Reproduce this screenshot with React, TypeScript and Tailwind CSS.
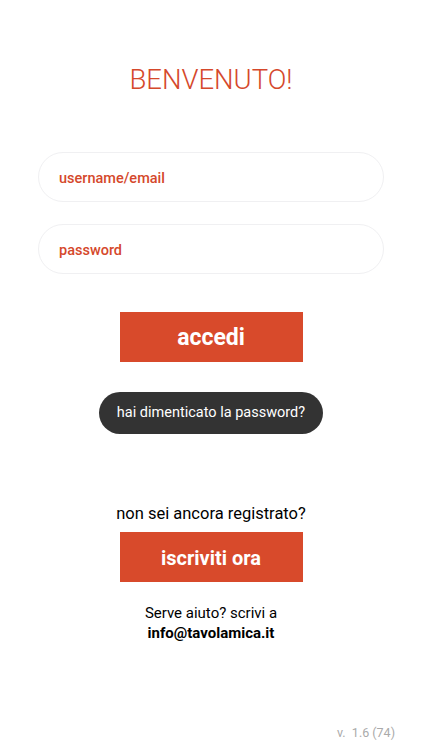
import React from "react";

export default function App() {
  return (
    <div
      className="w-[422px] h-[750px] bg-white flex flex-col items-center relative"
      style={{ fontFamily: "Roboto, 'Liberation Sans', sans-serif" }}
    >
      <h1 className="mt-[60px] h-[40px] text-[27.5px] leading-[40px] font-light text-[#d5482b]">
        BENVENUTO!
      </h1>
      <div className="mt-[52px] w-[346px] flex flex-col gap-[22px]">
        <div className="h-[50px] rounded-full border border-[#f0f0f2] flex items-center pl-[20px] pt-[3px]">
          <span className="text-[14.5px] font-medium text-[#d5482b]">username/email</span>
        </div>
        <div className="h-[50px] rounded-full border border-[#f0f0f2] flex items-center pl-[20px] pt-[3px]">
          <span className="text-[14.5px] font-medium text-[#d5482b]">password</span>
        </div>
      </div>
      <button className="mt-[38px] w-[183px] h-[50px] pt-[3px] bg-[#d84a2b] text-white text-[23px] font-bold flex items-center justify-center">
        accedi
      </button>
      <div className="mt-[30px] w-[224px] h-[42px] rounded-full bg-[#333333] text-white text-[14.5px] flex items-center justify-center">
        hai dimenticato la password?
      </div>
      <p className="mt-[69px] text-[16.5px] leading-[22px] text-black">non sei ancora registrato?</p>
      <button className="mt-[7px] w-[183px] h-[50px] pt-[2px] bg-[#d84a2b] text-white text-[20px] font-bold flex items-center justify-center">
        iscriviti ora
      </button>
      <div className="mt-[21px] text-center text-[15px] leading-[20px] text-black">
        <p>Serve aiuto? scrivi a</p>
        <p className="font-bold">info@tavolamica.it</p>
      </div>
      <span className="absolute right-[27px] top-[724px] text-[12.5px] text-[#aaaaaa]">v.&nbsp; 1.6 (74)</span>
    </div>
  );
}
